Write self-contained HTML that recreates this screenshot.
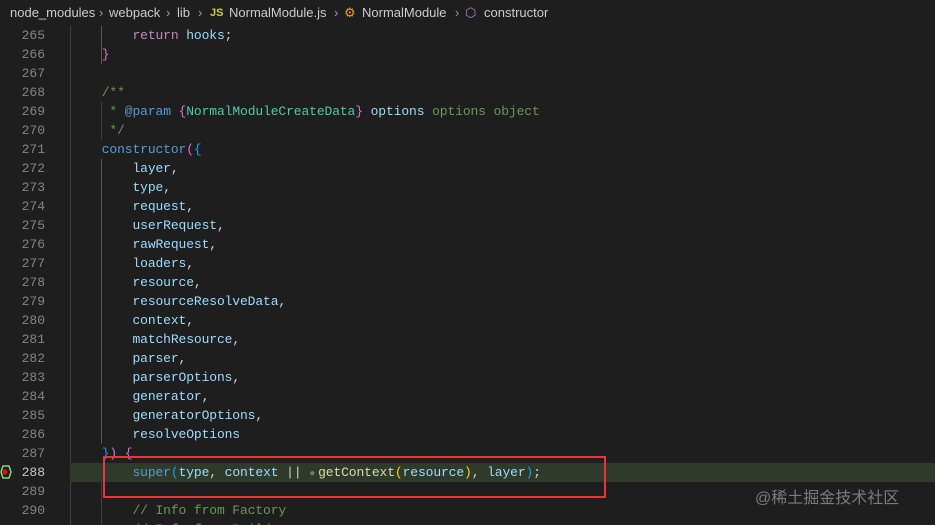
<!DOCTYPE html>
<html style="width:935px;height:525px;overflow:hidden"><head><meta charset="utf-8"><style>
html,body{margin:0;width:935px;height:525px;overflow:hidden}
body{background:#1e1e1e;position:relative;font-family:"Liberation Mono",monospace;}
.bc{position:absolute;left:0;top:0;width:935px;height:26px;background:#1e1e1e;font-family:"Liberation Sans",sans-serif;font-size:13px;color:#cccccc;line-height:26px;white-space:nowrap}
.bc span{position:absolute;top:0}
.ln{position:absolute;left:0;width:45px;text-align:right;font-size:13px;color:#858585;line-height:19px;height:19px}
.cd{position:absolute;left:71px;font-size:13px;line-height:19px;height:19px;white-space:pre;color:#d4d4d4;letter-spacing:-0.12px}
.g{position:absolute;width:1px;background:#404040}
.k{color:#c586c0}.v{color:#9cdcfe}.b{color:#569cd6}.c{color:#6a9955}.t{color:#4ec9b0}.f{color:#dcdcaa}
.p1{color:#da70d6}.p2{color:#179fff}.p3{color:#ffd700}
</style></head><body>
<div class="bc">
<span style="left:10px">node_modules</span><span style="left:99px;color:#999">›</span>
<span style="left:109px">webpack</span><span style="left:166px;color:#999">›</span>
<span style="left:177px">lib</span><span style="left:198px;color:#999">›</span>
<span style="left:210px;color:#cbcb41;font-weight:bold;font-size:11px">JS</span>
<span style="left:229px">NormalModule.js</span><span style="left:334px;color:#999">›</span>
<span style="left:344px;color:#ee9d28">⚙</span>
<span style="left:362px">NormalModule</span><span style="left:455px;color:#999">›</span>
<span style="left:465px;color:#b180d7">⬡</span>
<span style="left:484px">constructor</span>
</div>
<div class="g" style="left:70px;top:26px;height:499px"></div>
<div class="g" style="left:101px;top:26px;height:38px;background:#585858"></div>
<div class="g" style="left:101px;top:102px;height:38px"></div>
<div class="g" style="left:101px;top:159px;height:285px;background:#585858"></div>
<div class="g" style="left:101px;top:482px;height:43px"></div>

<div style="position:absolute;left:70px;top:463px;width:865px;height:19px;background:#2f3a2a"></div>

<div class="ln" style="top:26px">265</div><div class="cd" style="top:26px">        <span class="k">return</span> <span class="v">hooks</span>;</div>
<div class="ln" style="top:45px">266</div><div class="cd" style="top:45px">    <span class="p1">}</span></div>
<div class="ln" style="top:64px">267</div>
<div class="ln" style="top:83px">268</div><div class="cd" style="top:83px">    <span class="c">/**</span></div>
<div class="ln" style="top:102px">269</div><div class="cd" style="top:102px">    <span class="c"> * </span><span class="b">@param</span> <span class="p1">{</span><span class="t">NormalModuleCreateData</span><span class="p1">}</span> <span class="v">options</span> <span class="c">options object</span></div>
<div class="ln" style="top:121px">270</div><div class="cd" style="top:121px">    <span class="c"> */</span></div>
<div class="ln" style="top:140px">271</div><div class="cd" style="top:140px">    <span class="b">constructor</span><span class="p1">(</span><span class="p2">{</span></div>
<div class="ln" style="top:159px">272</div><div class="cd" style="top:159px">        <span class="v">layer</span>,</div>
<div class="ln" style="top:178px">273</div><div class="cd" style="top:178px">        <span class="v">type</span>,</div>
<div class="ln" style="top:197px">274</div><div class="cd" style="top:197px">        <span class="v">request</span>,</div>
<div class="ln" style="top:216px">275</div><div class="cd" style="top:216px">        <span class="v">userRequest</span>,</div>
<div class="ln" style="top:235px">276</div><div class="cd" style="top:235px">        <span class="v">rawRequest</span>,</div>
<div class="ln" style="top:254px">277</div><div class="cd" style="top:254px">        <span class="v">loaders</span>,</div>
<div class="ln" style="top:273px">278</div><div class="cd" style="top:273px">        <span class="v">resource</span>,</div>
<div class="ln" style="top:292px">279</div><div class="cd" style="top:292px">        <span class="v">resourceResolveData</span>,</div>
<div class="ln" style="top:311px">280</div><div class="cd" style="top:311px">        <span class="v">context</span>,</div>
<div class="ln" style="top:330px">281</div><div class="cd" style="top:330px">        <span class="v">matchResource</span>,</div>
<div class="ln" style="top:349px">282</div><div class="cd" style="top:349px">        <span class="v">parser</span>,</div>
<div class="ln" style="top:368px">283</div><div class="cd" style="top:368px">        <span class="v">parserOptions</span>,</div>
<div class="ln" style="top:387px">284</div><div class="cd" style="top:387px">        <span class="v">generator</span>,</div>
<div class="ln" style="top:406px">285</div><div class="cd" style="top:406px">        <span class="v">generatorOptions</span>,</div>
<div class="ln" style="top:425px">286</div><div class="cd" style="top:425px">        <span class="v">resolveOptions</span></div>
<div class="ln" style="top:444px">287</div><div class="cd" style="top:444px">    <span class="p2">}</span><span class="p1">)</span> <span class="p1">{</span></div>
<div class="ln" style="top:463px;color:#c6c6c6">288</div><div class="cd" style="top:463px">        <span class="b">super</span><span class="p2">(</span><span class="v">type</span>, <span class="v">context</span> || <span style="color:#777;font-size:10px;margin-right:3px">●</span><span class="f">getContext</span><span class="p3">(</span><span class="v">resource</span><span class="p3">)</span>, <span class="v">layer</span><span class="p2">)</span>;</div>
<div class="ln" style="top:482px">289</div>
<div class="ln" style="top:501px">290</div><div class="cd" style="top:501px">        <span class="c">// Info from Factory</span></div>
<div class="cd" style="top:520px;height:5px;overflow:hidden">        <span class="c">// Info from Build</span></div>

<svg style="position:absolute;left:0;top:465px" width="12" height="14"><polygon points="3,1 9,1 11,7 9,13 3,13 1,7" fill="none" stroke="#89d185" stroke-width="1.5"/><circle cx="5" cy="7" r="2.5" fill="#e51400"/></svg>

<div style="position:absolute;left:103px;top:456px;width:499px;height:38px;border:2px solid #e8343b"></div>
<div style="position:absolute;left:755px;top:484px;font-family:'Liberation Sans','Noto Sans CJK SC',sans-serif;font-size:16px;color:rgba(200,200,200,0.55)">@稀土掘金技术社区</div>
</body></html>
